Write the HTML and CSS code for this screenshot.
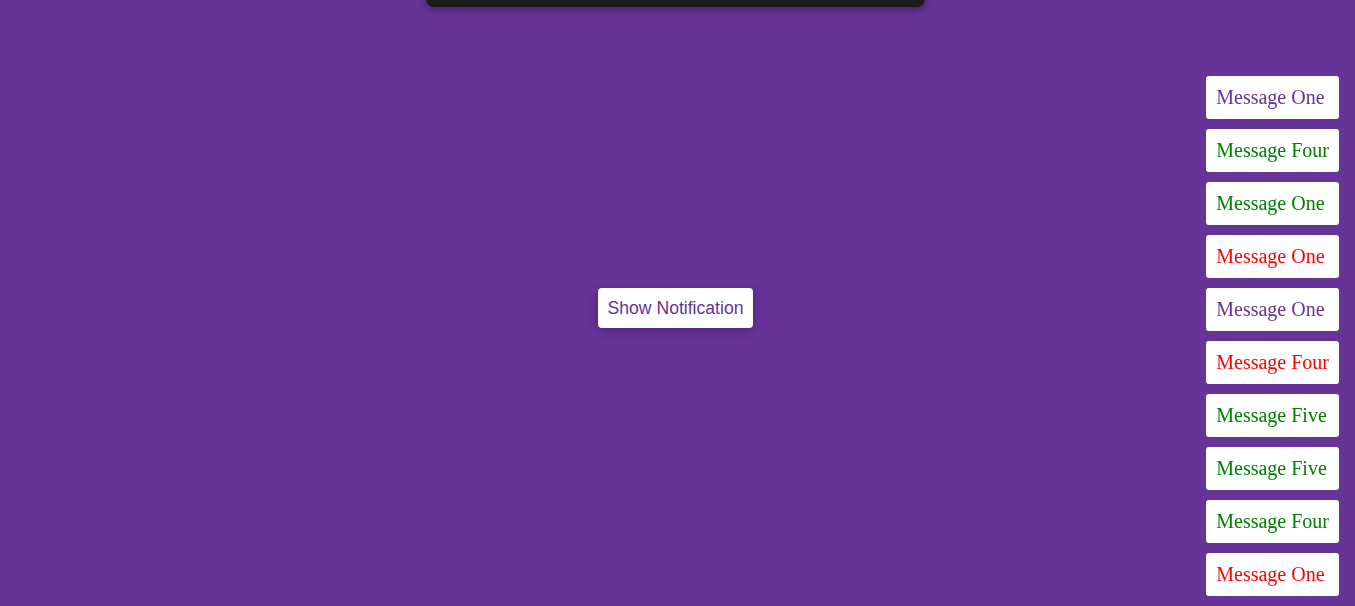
FILE: index.html
```html
<!DOCTYPE html>
<html lang="en">
<head>
<meta charset="utf-8">
<title>Notifications</title>
<link rel="stylesheet" href="styles.css">
</head>
<body>
<div class="topbar"></div>
<main class="stage">
  <button class="show-btn" type="button">Show Notification</button>
</main>
<div class="toasts">
  <div class="toast info">Message One</div>
  <div class="toast success">Message Four</div>
  <div class="toast success">Message One</div>
  <div class="toast error">Message One</div>
  <div class="toast info">Message One</div>
  <div class="toast error">Message Four</div>
  <div class="toast success">Message Five</div>
  <div class="toast success">Message Five</div>
  <div class="toast success">Message Four</div>
  <div class="toast error">Message One</div>
</div>
</body>
</html>
```
FILE: styles.css
```css
html, body {
  margin: 0;
  height: 100%;
}
body {
  background: #663399;
  overflow: hidden;
  font-family: "Liberation Sans", Arial, sans-serif;
}
.topbar {
  position: fixed;
  top: -40px;
  left: 426px;
  width: 499px;
  height: 47px;
  background: #1c1c1c;
  border-radius: 8px;
  box-shadow: 0 2px 8px rgba(0, 0, 0, 0.4);
}
.stage {
  height: 100%;
  display: flex;
  align-items: center;
  justify-content: center;
  padding: 10px 4px 0 0;
  box-sizing: border-box;
}
.show-btn {
  background: #fff;
  color: #663399;
  border: none;
  border-radius: 4px;
  padding: 10px 10px;
  font-family: "Liberation Sans", Arial, sans-serif;
  font-size: 17.6px;
  line-height: 20px;
  box-shadow: 0 2px 10px rgba(40, 0, 80, 0.35);
  cursor: pointer;
}
.toasts {
  position: fixed;
  top: 76px;
  right: 16px;
  display: flex;
  flex-direction: column;
  gap: 10px;
}
.toast {
  background: #fff;
  border-radius: 3px;
  padding: 10px 10px;
  font-family: "Liberation Serif", "Times New Roman", serif;
  font-size: 20px;
  line-height: 23px;
}
.toast.info { color: #663399; }
.toast.success { color: green; }
.toast.error { color: red; }
```
